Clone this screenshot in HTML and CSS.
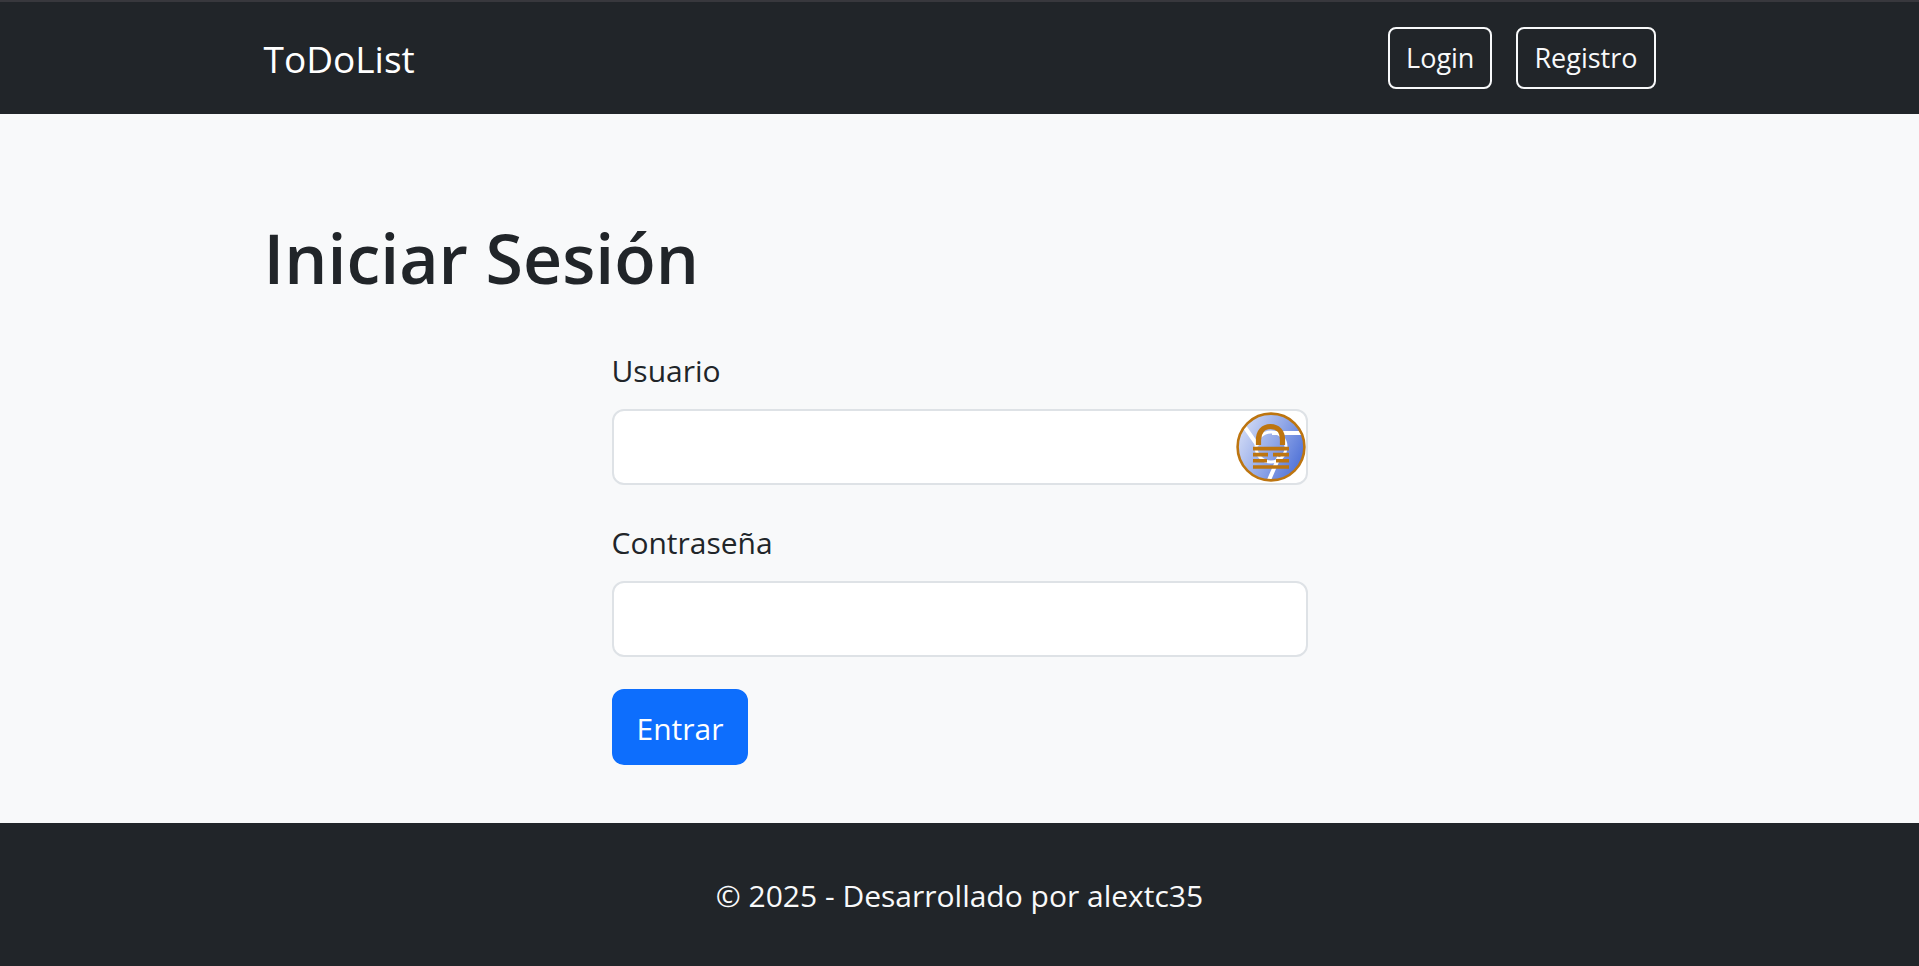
FILE: index.html
```html
<!DOCTYPE html>
<html lang="es">
<head>
<meta charset="utf-8">
<meta name="viewport" content="width=device-width, initial-scale=1">
<title>Iniciar Sesión</title>
<link rel="stylesheet" href="styles.css">
</head>
<body>
<header class="navbar">
  <div class="container navbar-row">
    <a class="brand" href="#">ToDoList</a>
    <nav class="nav-actions">
      <a class="btn-outline" href="#login">Login</a>
      <a class="btn-outline" href="#registro">Registro</a>
    </nav>
  </div>
</header>
<main class="main">
  <div class="container">
    <h1 class="title">Iniciar Sesión</h1>
    <form class="form">
      <div class="field">
        <label class="label" for="usuario">Usuario</label>
        <div class="input-wrap">
          <input class="input" id="usuario" name="usuario" type="text">
          <svg class="lock" viewBox="0 0 70 70" aria-hidden="true">
            <defs>
              <linearGradient id="blue" x1="0" y1="0.25" x2="1" y2="0.75">
                <stop offset="0" stop-color="#d3dcf6"/>
                <stop offset="0.5" stop-color="#93a9e8"/>
                <stop offset="1" stop-color="#4c6fd6"/>
              </linearGradient>
              <clipPath id="disc"><circle cx="35" cy="35" r="33"/></clipPath>
            </defs>
            <circle cx="35" cy="35" r="33" fill="url(#blue)"/>
            <g clip-path="url(#disc)" fill="none" stroke="#fff">
              <circle cx="35" cy="35" r="15" stroke-width="3"/>
              <path d="M8 14L22 34M36 21H66M43 45L33 68" stroke-width="4"/>
            </g>
            <g fill="none" stroke="#bd7510">
              <circle cx="35" cy="35" r="33.4" stroke-width="2.6"/>
              <path d="M22.500 33V28C22.500 20 27 14.500 34.500 14.500S46.500 20 46.500 28V33" stroke-width="5.200"/>
              <path d="M17 36.600H53M17 42.600H32M37 42.600H53M17 48.800H31M40 48.800H53M17 55H53" stroke-width="3.600"/>
            </g>
          </svg>
        </div>
      </div>
      <div class="field">
        <label class="label" for="contrasena">Contraseña</label>
        <input class="input" id="contrasena" name="contrasena" type="password">
      </div>
      <button class="btn-primary" type="submit">Entrar</button>
    </form>
  </div>
</main>
<footer class="footer">© 2025 - Desarrollado por alextc35</footer>
</body>
</html>
```
FILE: styles.css
```css
* { box-sizing: border-box; }

body {
  margin: 0;
  min-height: 100vh;
  display: flex;
  flex-direction: column;
  background: #f8f9fa;
  color: #212529;
  font: 400 30px/48px "Open Sans", "Segoe UI", sans-serif;
}

.container {
  width: 100%;
  max-width: 1440px;
  margin: 0 auto;
  padding: 0 24px;
}

.navbar {
  background: #212529;
  border-top: 2px solid #38383d;
  padding: 25px 0;
}

.navbar-row {
  display: flex;
  align-items: center;
  justify-content: space-between;
}

.brand {
  padding-top: 2px;
  color: #fff;
  font-size: 37px;
  line-height: 60px;
  text-decoration: none;
}

.nav-actions {
  display: flex;
  gap: 24px;
}

.btn-outline {
  padding: 8px 16px;
  border: 2px solid #f8f9fa;
  border-radius: 8px;
  color: #f8f9fa;
  font-size: 27px;
  line-height: 42px;
  text-decoration: none;
}

.main {
  flex: 1;
  padding: 100px 0 48px;
}

.title {
  margin: 0 0 44px;
  font-size: 68px;
  line-height: 87px;
  font-weight: 600;
}

.form {
  width: 50%;
  margin: 0 auto;
}

.field { margin-bottom: 32px; }

.label {
  display: block;
  padding-top: 2px;
  margin-bottom: 14px;
}

.input-wrap { position: relative; }

.input {
  display: block;
  width: 100%;
  height: 76px;
  padding: 12px 24px;
  border: 2px solid #dee2e6;
  border-radius: 12px;
  background: #fff;
  color: inherit;
  font: inherit;
}

.lock {
  position: absolute;
  top: 3px;
  right: 2px;
  width: 70px;
  height: 70px;
}

.btn-primary {
  display: block;
  padding: 14px 23px 10px;
  border: 2px solid #0d6efd;
  border-radius: 12px;
  background: #0d6efd;
  color: #fff;
  font: inherit;
}

.footer {
  padding: 49px 24px 47px;
  background: #212529;
  color: #f8f9fa;
  line-height: 47px;
  text-align: center;
}
```
